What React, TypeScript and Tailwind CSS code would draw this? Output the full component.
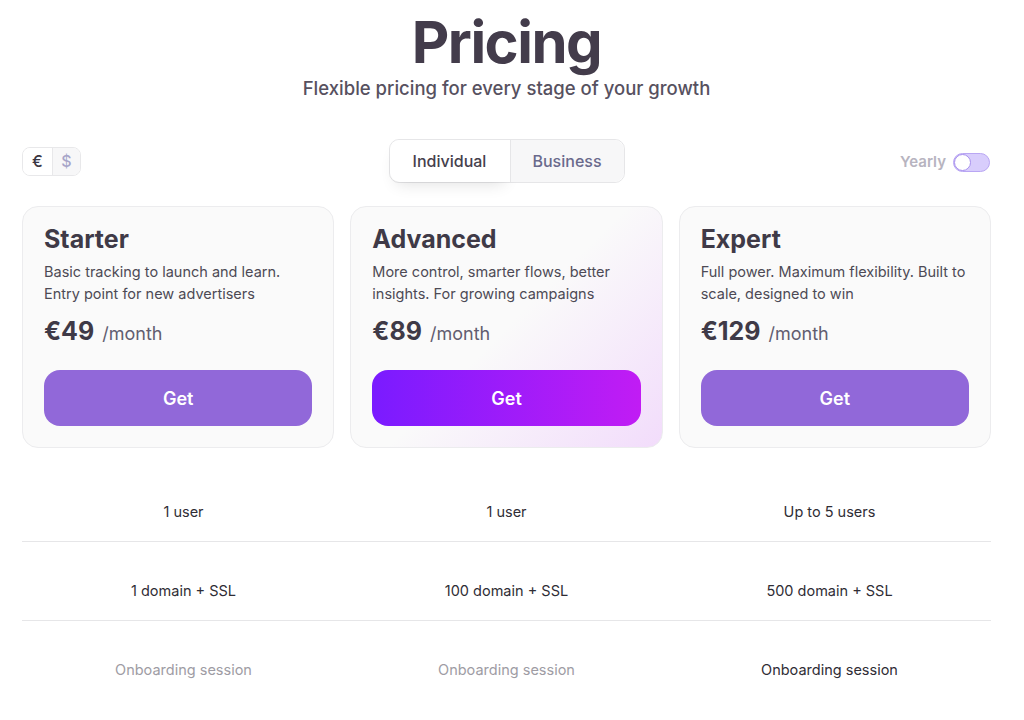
import { useState } from 'react'

const PLANS = [
  { name: 'Starter', desc: ['Basic tracking to launch and learn.', 'Entry point for new advertisers'], price: '€49', featured: false },
  { name: 'Advanced', desc: ['More control, smarter flows, better', 'insights. For growing campaigns'], price: '€89', featured: true },
  { name: 'Expert', desc: ['Full power. Maximum flexibility. Built to', 'scale, designed to win'], price: '€129', featured: false },
]

const FEATURES = [
  [{ t: '1 user', on: true }, { t: '1 user', on: true }, { t: 'Up to 5 users', on: true }],
  [{ t: '1 domain + SSL', on: true }, { t: '100 domain + SSL', on: true }, { t: '500 domain + SSL', on: true }],
  [{ t: 'Onboarding session', on: false }, { t: 'Onboarding session', on: false }, { t: 'Onboarding session', on: true }],
]

export default function App() {
  const [tab, setTab] = useState<'individual' | 'business'>('individual')
  const [currency, setCurrency] = useState<'eur' | 'usd'>('eur')

  return (
    <main className="min-h-screen bg-white text-[#3f3a47]" style={{ fontFamily: 'Inter, "Noto Sans", sans-serif' }}>
      <div className="w-[969px] ml-[22px]">

        {/* Header */}
        <div className="flex flex-col items-center pt-[6px]">
          <h1 className="text-[58px] leading-[72px] font-bold tracking-[-1.5px] text-[#433c4b]">Pricing</h1>
          <p className="text-[18.5px] leading-[24px] font-medium text-[#57515f] mt-[-2px]">Flexible pricing for every stage of your growth</p>
        </div>

        {/* Controls */}
        <div className="grid grid-cols-[1fr_auto_1fr] items-center mt-[39px] h-[44px]">
          <div className="flex">
            <div className="flex h-[29px] rounded-[8px] border border-[#e8e8ea] overflow-hidden text-[16px] font-medium">
              <button onClick={() => setCurrency('eur')} className={`w-[29px] flex items-center justify-center ${currency === 'eur' ? 'bg-white text-[#3a3542]' : 'bg-[#f7f7f8] text-[#a7a5c9]'}`}>€</button>
              <button onClick={() => setCurrency('usd')} className={`w-[28px] flex items-center justify-center border-l border-[#e8e8ea] ${currency === 'usd' ? 'bg-white text-[#3a3542]' : 'bg-[#f7f7f8] text-[#a7a5c9]'}`}>$</button>
            </div>
          </div>

          <div className="flex h-[44px] rounded-[10px] border border-[#e6e6e8] text-[16px] font-medium">
            <button onClick={() => setTab('individual')} className={`w-[120px] rounded-l-[10px] ${tab === 'individual' ? 'bg-white text-[#45404c] shadow-[0_8px_16px_-6px_rgba(0,0,0,0.12)]' : 'bg-[#f7f7f8] text-[#6a6a8c]'}`}>Individual</button>
            <button onClick={() => setTab('business')} className={`w-[114px] rounded-r-[10px] border-l border-[#e6e6e8] ${tab === 'business' ? 'bg-white text-[#45404c]' : 'bg-[#f7f7f8] text-[#6a6a8c]'}`}>Business</button>
          </div>

          <div className="flex items-center justify-end gap-[7px] mr-[1px] pt-[2px]">
            <span className="text-[15px] font-semibold text-[#b7b4c0]">Yearly</span>
            <div className="w-[37px] h-[19px] rounded-full bg-[#d8cdfc] border border-[#b9a6f3] flex items-center">
              <div className="w-[17px] h-[17px] rounded-full bg-white border border-[#a790ee]" />
            </div>
          </div>
        </div>

        {/* Cards */}
        <div className="grid grid-cols-3 gap-[16px] mt-[23px]">
          {PLANS.map(p => (
            <div
              key={p.name}
              className={`rounded-[16px] border border-[#ececee] px-[21px] pt-[17px] pb-[21px] ${p.featured ? 'bg-[linear-gradient(135deg,#fafafa_0%,#fafafa_50%,#f2dcfb_100%)]' : 'bg-[#fafafa]'}`}
            >
              <h2 className="text-[25px] leading-[30px] font-bold text-[#3f3a47]">{p.name}</h2>
              <p className="text-[14.5px] leading-[22px] text-[#4d4a55] mt-[7px]">
                {p.desc[0]}<br />{p.desc[1]}
              </p>
              <div className="flex items-baseline gap-[8px] mt-[11px]">
                <span className="text-[25px] leading-[30px] font-bold text-[#3f3a47]">{p.price}</span>
                <span className="text-[18px] text-[#615d70]">/month</span>
              </div>
              <button
                className={`mt-[23px] w-full h-[56px] rounded-[16px] text-white text-[18px] font-semibold ${p.featured ? 'bg-[linear-gradient(90deg,#7a1bff,#c11cf4)]' : 'bg-[#9168d9]'}`}
              >
                Get
              </button>
            </div>
          ))}
        </div>

        {/* Features */}
        <div className="mt-[15px]">
          {FEATURES.map((row, i) => (
            <div key={i} className={`grid grid-cols-3 pt-[39px] pb-[19px] ${i < FEATURES.length - 1 ? 'border-b border-[#e6e6e8]' : ''}`}>
              {row.map((f, j) => (
                <div key={j} className={`text-center text-[14.5px] leading-[20px] font-normal ${f.on ? 'text-[#2f2d35]' : 'text-[#9e9ca4]'}`}>{f.t}</div>
              ))}
            </div>
          ))}
        </div>

      </div>
    </main>
  )
}
